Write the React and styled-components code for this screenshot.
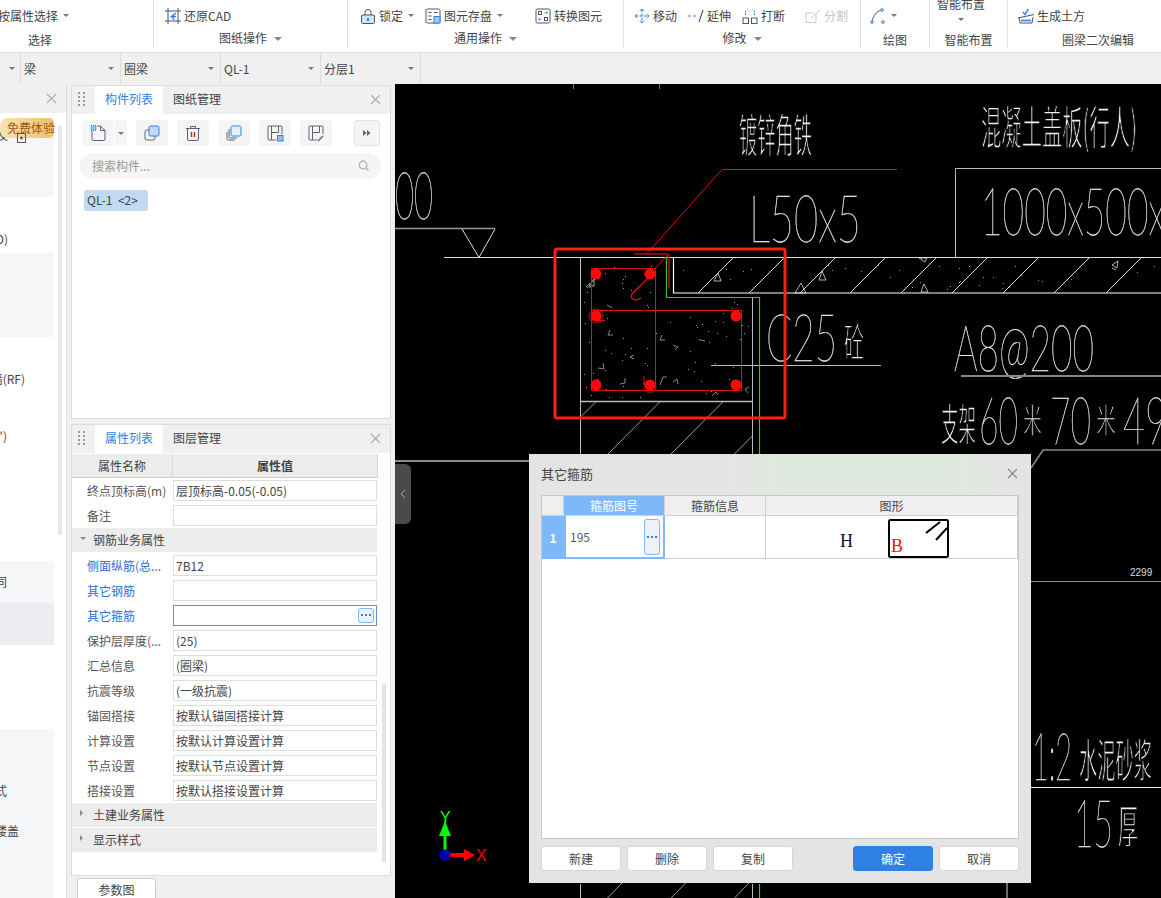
import React from "react";
import styled, { createGlobalStyle } from "styled-components";

const GlobalStyle = createGlobalStyle`
    html, body {
        margin: 0;
        padding: 0;
        background: #f0f0f0;
        font-family: "Noto Sans CJK SC", "Liberation Sans", sans-serif;
        font-size: 12px;
        color: #444;
    }
    * {
        box-sizing: border-box;
    }
`;

// 左侧树的色带
const treeBands = [
    { h: 20, tone: "none" },
    { h: 64, tone: "light", pt: 0, mt: -5, label: "及", end: 8, icon: true },
    { h: 56, tone: "none", pt: 35, label: "D)", end: 8 },
    { h: 84, tone: "light" },
    { h: 224, tone: "none", pt: 35, label: "墙(RF)", end: 25, next: "')", nextMt: 43 },
    { h: 42, tone: "light", pt: 14, label: "同", end: 7 },
    { h: 42, tone: "dark" },
    { h: 84, tone: "none" },
    { h: 169, tone: "light", pt: 55, label: "式", end: 7, next: "楼盖", nextEnd: 19, nextMt: 26 },
];

const propRows = [
    { name: "终点顶标高(m)", value: "层顶标高-0.05(-0.05)" },
    { name: "备注", value: "" },
    { group: "钢筋业务属性", open: true },
    { name: "侧面纵筋(总...", value: "7B12", blue: true },
    { name: "其它钢筋", value: "", blue: true },
    { name: "其它箍筋", value: "", blue: true, active: true },
    { name: "保护层厚度(...", value: "(25)" },
    { name: "汇总信息", value: "(圈梁)" },
    { name: "抗震等级", value: "(一级抗震)" },
    { name: "锚固搭接", value: "按默认锚固搭接计算" },
    { name: "计算设置", value: "按默认计算设置计算" },
    { name: "节点设置", value: "按默认节点设置计算" },
    { name: "搭接设置", value: "按默认搭接设置计算" },
    { group: "土建业务属性" },
    { group: "显示样式" },
];

// 混凝土里的小点, 固定种子
function makeSpecks() {
    const list = [];
    let seed = 37;
    const next = () => {
        seed = (seed * 1103515245 + 12345) % 2147483648;
        return seed / 2147483648;
    };
    for (let i = 0; i < 90; i++) {
        const x = 584 + next() * 166;
        const y = 262 + next() * 136;
        if (x > 658 && y < 300) continue;
        list.push([Math.round(x), Math.round(y)]);
    }
    for (let i = 0; i < 34; i++) {
        list.push([Math.round(676 + next() * 480), Math.round(262 + next() * 28)]);
    }
    return list;
}
const specks = makeSpecks();

const concreteTicks = [
    "M610 330l-2 5h5", "M662 335l-2 5h5", "M634 355l-4 2 4 2", "M598 368l6 1-1-6", "M620 384l5-1v-5",
    "M673 345l5 2-3 3", "M660 385l3-8h4", "M673 382l4-3 1 5", "M590 283l-4 4h5", "M607 305l5 3",
    "M712 396l4-4 2 3", "M748 393l-3-4 4-2", "M700 340l5 1",
];

const rebarDots = [[596, 274], [650, 274], [596, 316], [736, 316], [596, 385], [650, 385], [736, 385]];

function CadDrawing() {
    const hatchX = [698, 749, 800, 850, 901, 952, 1003, 1054, 1106];
    return (
        <CadSvg viewBox="395 84 766 814">
            <CadText x="395" y="219" textLength="38" fontSize="66">00</CadText>
            <CadCjk x="739" y="152" textLength="73" fontSize="46">镀锌角铁</CadCjk>
            <CadCjk x="981" y="144" textLength="156" fontSize="46">混凝土盖板(行人)</CadCjk>
            <CadText x="749" y="242" textLength="112" fontSize="66">L50x5</CadText>
            <CadText x="981" y="235" textLength="184" fontSize="66">1000x500x</CadText>
            <CadText x="766" y="361" textLength="71" fontSize="66">C25</CadText>
            <CadCjk x="844" y="357" textLength="20" fontSize="40">砼</CadCjk>
            <CadText x="954" y="371" textLength="140" fontSize="64">A8@200</CadText>
            <CadCjk x="941" y="441" textLength="35" fontSize="44">支架</CadCjk>
            <CadText x="979" y="444" textLength="39" fontSize="66">60</CadText>
            <CadCjk x="1023" y="433" textLength="19" fontSize="34">米</CadCjk>
            <CadText x="1050" y="444" textLength="41" fontSize="66">70</CadText>
            <CadCjk x="1096" y="433" textLength="20" fontSize="34">米</CadCjk>
            <CadText x="1123" y="444" textLength="44" fontSize="66">49</CadText>
            <CadText x="1032" y="780" textLength="40" fontSize="66">1:2</CadText>
            <CadCjk x="1079" y="777" textLength="73" fontSize="46">水泥砂浆</CadCjk>
            <CadText x="1074" y="847" textLength="39" fontSize="66">15</CadText>
            <CadCjk x="1118" y="843" textLength="20" fontSize="46">厚</CadCjk>
            <SmallNumber x="1130" y="576">2299</SmallNumber>

            <g stroke="#dcdcdc" fill="none" strokeWidth="1">
                <path d="M444 257.5H1161" />
                <path d="M580.5 258V454M580.5 884V898M752.5 298V454M752.5 884V898" stroke="#bbb" />
                <path d="M673.5 258V293H1161" strokeWidth="1.2" stroke="#fff" />
                <path d="M580 401.5H752" strokeWidth="1.4" stroke="#bbb" />
                <path d="M666 297.5H752" stroke="#ccc" />
                <path d="M395 228.5H495" stroke="#999" strokeWidth="1.6" />
                <path d="M462 229L479 257.5L495 229" />
                <path d="M955.5 257V168.5H1161" stroke="#bbb" />
                <path d="M711 365.5H881" stroke="#bbb" />
                <path d="M961 376H1161" stroke="#888" strokeWidth="2" />
                <path d="M1031 468L1043 450H1161" stroke="#888" strokeWidth="1.6" />
                <path d="M395 461H529" stroke="#888" strokeWidth="2" />
                <path d="M1031 787.5H1161" stroke="#eee" />
                <path d="M1007 883V898" stroke="#888" strokeWidth="1.6" />
                {hatchX.map((x) => (
                    <path key={x} d={`M${x} 293L${x + 35} 258`} stroke="#ddd" />
                ))}
                <path d="M580.6 417L596 401.7M608 454L660 401.7M671 454L723 401.7M734.5 454L752.6 435.7M607.5 898L622 883M671 898L685.7 883M734.5 898L749 883" stroke="#999" />
                <path d="M714 281l4-8 3 8zM795 293l6-10 5 10zM819 280l3-9 4 9zM921 292l3-8 4 8zM1112 265l6-4-1 7zM919 258l6 4 2-4z" strokeWidth="0.8" />
                <path d="M589 286l5-7v7zM1112 268l4 2" strokeWidth="0.8" />
                {concreteTicks.map((d) => (
                    <path key={d} d={d} stroke="#aaa" strokeWidth="0.8" />
                ))}
            </g>
            <g fill="#999">
                {specks.map(([x, y]) => (
                    <rect key={`${x}-${y}`} x={x} y={y} width="1" height="1" />
                ))}
            </g>

            <g fill="none" stroke="#2fc82f">
                <path d="M666.5 257V297.5H759.5V454M759.5 884V898" strokeWidth="1.2" />
                <path d="M1031 581.5H1161" stroke="#35d035" />
                <path d="M573.5 84V89M659.5 84V89" stroke="#1fa51f" />
            </g>

            <g fill="none" stroke="#e01010" strokeWidth="1">
                <path d="M646.6 254L722 169.5H897" />
                <path d="M591.5 390.5V268.5H655.5V390.5" />
                <path d="M591.5 390.5H741.5V310.5H591.5" />
                <path d="M655 268.7L668 254.5" />
                <path d="M634 254H668M669 254V289" stroke="#a81414" strokeWidth="1.4" />
                <path d="M650 276L632 294C629 299 636 302 641 298" strokeWidth="1.3" />
                <circle cx="596" cy="316" r="7" stroke="#c01010" />
                <path d="M596 320.5H605" stroke="#c01010" />
                <path d="M644 376V385" />
                <circle cx="650" cy="387" r="6" stroke="#a01010" />
            </g>
            {rebarDots.map(([x, y]) => (
                <circle key={`${x}-${y}`} cx={x} cy={y} r="5.5" fill="#ff0808" />
            ))}
            <rect x="555" y="249" width="230" height="169" rx="2" fill="none" stroke="#fa2014" strokeWidth="3" />

            <path d="M445 855V826" stroke="#00ff00" strokeWidth="3" />
            <path d="M445 821L451 836H439Z" fill="#00ff00" />
            <path d="M450 855H468" stroke="#ff0000" strokeWidth="4" />
            <path d="M475 855L464 849V861Z" fill="#ff0000" />
            <ellipse cx="445" cy="855" rx="5.5" ry="5.5" fill="#0000b0" />
            <AxisLabel x="440" y="823" fill="#00ff00">Y</AxisLabel>
            <AxisLabel x="476" y="861" fill="#ff0000">X</AxisLabel>
        </CadSvg>
    );
}

const RIcon = ({ children }) => (
    <svg width="16" height="16" viewBox="0 0 16 16" fill="none" stroke="#4a5468" strokeWidth="1">
        {children}
    </svg>
);

const icons = {
    restore: (
        <RIcon>
            <path d="M3 0V16M13 0V16M0 3H16M0 13H16" />
            <path d="M11 5L6.5 8.5H11M7 8.5L9 12" stroke="#2f80e5" strokeWidth="1.4" />
        </RIcon>
    ),
    lock: (
        <RIcon>
            <path d="M5 7V4.5a3 3 0 0 1 6 0V7" />
            <rect x="1.5" y="7" width="13" height="8.5" rx="1" fill="#cfe3fa" />
            <path d="M8 10v3" stroke="#2f80e5" strokeWidth="2" />
        </RIcon>
    ),
    store: (
        <RIcon>
            <rect x="1" y="1" width="14" height="14" rx="1.5" />
            <path d="M3.5 4.5h3M9 4.5h3.5M3.5 8h3M3.5 11.5h3" />
            <rect x="9" y="8.5" width="6" height="6.5" fill="#9fc8f5" stroke="#2f80e5" />
        </RIcon>
    ),
    convert: (
        <RIcon>
            <rect x="1" y="1" width="14" height="14" rx="1.5" />
            <rect x="3.5" y="3.5" width="3" height="3" />
            <rect x="9.5" y="9.5" width="3" height="3" />
            <path d="M9.5 5h3l-1-1.5M6.5 11h-3l1 1.5" stroke="#2f80e5" />
        </RIcon>
    ),
    move: (
        <RIcon>
            <path d="M8 1V15M1 8H15M8 1L6 3.5M8 1L10 3.5M8 15L6 12.5M8 15L10 12.5M1 8L3.5 6M1 8L3.5 10M15 8L12.5 6M15 8L12.5 10" stroke="#2f80e5" strokeDasharray="3 1.4" />
        </RIcon>
    ),
    extend: (
        <RIcon>
            <path d="M0 8H3M5 8H8" stroke="#2f80e5" />
            <path d="M11 14L15 2" stroke="#333" />
        </RIcon>
    ),
    split: (
        <RIcon>
            <rect x="1" y="10" width="5.5" height="5.5" />
            <rect x="9.5" y="10" width="5.5" height="5.5" />
            <path d="M3.5 7V3l2-1.5M12.5 7V3l-2-1.5" stroke="#2f80e5" strokeDasharray="2 1" />
        </RIcon>
    ),
    cut: (
        <RIcon>
            <path d="M11 6v8.5H1V5h7" stroke="#c8c8c8" />
            <path d="M6 10L15 2" stroke="#c8c8c8" />
        </RIcon>
    ),
    curve: (
        <RIcon>
            <path d="M2 14C3 8 6 3 12 2" stroke="#4a5468" />
            <circle cx="2" cy="14" r="1.3" stroke="#2f80e5" fill="#fff" />
            <circle cx="12" cy="2" r="1.3" stroke="#2f80e5" fill="#fff" />
            <circle cx="13" cy="14" r="1.3" stroke="#2f80e5" fill="#fff" />
        </RIcon>
    ),
    earth: (
        <RIcon>
            <path d="M1 9L2 15H14L15 9" />
            <path d="M0 10L16 6.5" />
            <path d="M3 12.5H13" stroke="#2f80e5" strokeWidth="1.6" />
            <path d="M5 4L7 6.5L10.5 1" stroke="#2f80e5" strokeWidth="1.4" />
        </RIcon>
    ),
};

const TIcon = ({ children }) => (
    <svg width="18" height="18" viewBox="0 0 18 18" fill="none" stroke="#5a6275" strokeWidth="1">
        {children}
    </svg>
);

const toolIcons = [
    <TIcon key="copy">
        <rect x="2" y="6" width="10" height="10" rx="2" />
        <rect x="6" y="2" width="10" height="10" rx="1.5" fill="#c3daf6" stroke="#2f80e5" />
    </TIcon>,
    <TIcon key="del">
        <path d="M2 4.5H16M6.5 4.5V2.5H11.5V4.5" />
        <path d="M3.5 4.5V15a1.5 1.5 0 0 0 1.5 1.5H13a1.5 1.5 0 0 0 1.5-1.5V4.5" />
        <path d="M7.5 8V13M10.5 8V13" stroke="#e01818" strokeWidth="1.4" />
    </TIcon>,
    <TIcon key="stack">
        <path d="M2 8V14.5A1.5 1.5 0 0 0 3.5 16H10" />
        <path d="M4 5V12.5A1.5 1.5 0 0 0 5.5 14H12" />
        <rect x="6" y="2" width="10" height="10" rx="1.5" fill="#e6f0fc" stroke="#2f80e5" />
    </TIcon>,
    <TIcon key="save">
        <path d="M10 16H3a1 1 0 0 1-1-1V3a1 1 0 0 1 1-1h12a1 1 0 0 1 1 1v7" />
        <path d="M5.5 2V8.5H12.5V2M5.5 8.5V16" />
        <rect x="11.5" y="11.5" width="5.5" height="5.5" fill="#8fbdf3" stroke="#2f80e5" />
    </TIcon>,
    <TIcon key="edit">
        <path d="M10 16H3a1 1 0 0 1-1-1V3a1 1 0 0 1 1-1h12a1 1 0 0 1 1 1v7" />
        <path d="M5.5 2V8.5H12.5V2M5.5 8.5V16" />
        <path d="M11 17L16 12" stroke="#888" strokeWidth="2" />
    </TIcon>,
];

function Grip() {
    return (
        <GripBox>
            {[0, 1, 2, 3, 4, 5, 6, 7].map((i) => (
                <i key={i} />
            ))}
        </GripBox>
    );
}

function CloseMark({ dark }) {
    return (
        <svg width="11" height="11" viewBox="0 0 11 11" stroke={dark ? "#888" : "#aaa"} strokeWidth="1.1">
            <path d="M1 1L10 10M10 1L1 10" />
        </svg>
    );
}

function Dots() {
    return (
        <svg width="10" height="2" viewBox="0 0 10 2" fill="#2f80e5">
            <rect x="0" width="2" height="2" />
            <rect x="4" width="2" height="2" />
            <rect x="8" width="2" height="2" />
        </svg>
    );
}

function PanelHeader({ active, other }) {
    return (
        <PanelHead>
            <Grip />
            <ActiveTab>{active}</ActiveTab>
            <IdleTab>{other}</IdleTab>
            <CloseSlot>
                <CloseMark />
            </CloseSlot>
        </PanelHead>
    );
}

function App() {
    return (
        <Page>
            <GlobalStyle />
            <Ribbon>
                <RibbonGroup $w={227}>
                    <TopRow $pad={71}>
                        <Tool>按属性选择<Caret /></Tool>
                    </TopRow>
                    <GroupLabel>选择</GroupLabel>
                </RibbonGroup>
                <RibbonGroup $w={194}>
                    <TopRow $pad={11}>
                        <Tool>{icons.restore}<span>还原CAD</span></Tool>
                    </TopRow>
                    <GroupLabel $up>图纸操作<LabelCaret /></GroupLabel>
                </RibbonGroup>
                <RibbonGroup $w={276}>
                    <TopRow $pad={12}>
                        <Tool $w={65}>{icons.lock}<span>锁定</span><Caret /></Tool>
                        <Tool $w={110}>{icons.store}<span>图元存盘</span><Caret /></Tool>
                        <Tool>{icons.convert}<span>转换图元</span></Tool>
                    </TopRow>
                    <GroupLabel $up>通用操作<LabelCaret /></GroupLabel>
                </RibbonGroup>
                <RibbonGroup $w={237}>
                    <TopRow $pad={10}>
                        <Tool $w={54}>{icons.move}<span>移动</span></Tool>
                        <Tool $w={54}>{icons.extend}<span>延伸</span></Tool>
                        <Tool $w={63}>{icons.split}<span>打断</span></Tool>
                        <Tool $off>{icons.cut}<span>分割</span></Tool>
                    </TopRow>
                    <GroupLabel $up>修改<LabelCaret /></GroupLabel>
                </RibbonGroup>
                <RibbonGroup $w={69}>
                    <TopRow $pad={9}>
                        <Tool>{icons.curve}<Caret /></Tool>
                    </TopRow>
                    <GroupLabel>绘图</GroupLabel>
                </RibbonGroup>
                <RibbonGroup $w={78}>
                    <SmartTop>
                        <span>智能布置</span>
                        <Caret />
                    </SmartTop>
                    <GroupLabel>智能布置</GroupLabel>
                </RibbonGroup>
                <RibbonGroup $w={180} $last>
                    <TopRow $pad={10}>
                        <Tool>{icons.earth}<span>生成土方</span></Tool>
                    </TopRow>
                    <GroupLabel>圈梁二次编辑</GroupLabel>
                </RibbonGroup>
            </Ribbon>

            <SelectBar>
                <SelectCell $w={21}><Caret /></SelectCell>
                <SelectCell $w={100}>梁<Caret /></SelectCell>
                <SelectCell $w={100}>圈梁<Caret /></SelectCell>
                <SelectCell $w={100}>QL-1<Caret /></SelectCell>
                <SelectCell $w={100}>分层1<Caret /></SelectCell>
            </SelectBar>

            <Workspace>
                <TreePanel>
                    <TreeHead>
                        <CloseMark />
                    </TreeHead>
                    <TreeBody>
                        {treeBands.map((b, i) => (
                            <TreeBand key={i} $h={b.h} $tone={b.tone} $pt={b.pt || 0}>
                                {b.label && (
                                    <TreeText $end={b.end} $mt={b.mt}>
                                        {b.label}
                                        {b.icon && (
                                            <TreeIcon>
                                                <svg width="9" height="10" viewBox="0 0 9 10" fill="none" stroke="#555">
                                                    <rect x="0.5" y="0.5" width="8" height="9" />
                                                    <circle cx="4.5" cy="5" r="1" fill="#555" />
                                                </svg>
                                            </TreeIcon>
                                        )}
                                    </TreeText>
                                )}
                                {b.next && (
                                    <TreeText $end={b.nextEnd || 7} $mt={b.nextMt}>
                                        {b.next}
                                    </TreeText>
                                )}
                            </TreeBand>
                        ))}
                    </TreeBody>
                    <TreeScroll />
                    <FreeBadge>免费体验</FreeBadge>
                </TreePanel>

                <MiddleColumn>
                    <Panel $h={334}>
                        <PanelHeader active="构件列表" other="图纸管理" />
                        <IconBar>
                            <SplitButton>
                                <IconButton $w={32}>
                                    <TIcon>
                                        <path d="M3 7V15a1.5 1.5 0 0 0 1.5 1.5H14.5a1.5 1.5 0 0 0 1.5-1.5V6.5L11.5 2H8" />
                                        <path d="M11.5 2V6.5H16" />
                                        <rect x="2" y="1.5" width="5" height="5" fill="#8fbdf3" stroke="#2f80e5" strokeDasharray="1 1" />
                                    </TIcon>
                                </IconButton>
                                <DropPart><Caret /></DropPart>
                            </SplitButton>
                            {toolIcons.map((icon) => (
                                <IconButton key={icon.key} $w={32}>{icon}</IconButton>
                            ))}
                            <MoreButton>
                                <svg width="8" height="6" viewBox="0 0 8 6" fill="#666">
                                    <path d="M0 0L3.5 3L0 6ZM4 0L7.5 3L4 6Z" />
                                </svg>
                            </MoreButton>
                        </IconBar>
                        <SearchBox>
                            <span>搜索构件...</span>
                            <svg width="11" height="11" viewBox="0 0 11 11" fill="none" stroke="#aaa" strokeWidth="1.2">
                                <circle cx="5" cy="5" r="3.8" />
                                <path d="M8 8L10.5 10.5" />
                            </svg>
                        </SearchBox>
                        <Chip>QL-1&nbsp;&nbsp;&lt;2&gt;</Chip>
                    </Panel>

                    <Panel $h={452}>
                        <PanelHeader active="属性列表" other="图层管理" />
                        <PropHead>
                            <PropHeadCell>属性名称</PropHeadCell>
                            <PropHeadCell $bold>属性值</PropHeadCell>
                        </PropHead>
                        {propRows.map((row) =>
                            row.group ? (
                                <GroupRow key={row.group}>
                                    <GroupBar>
                                        <GroupArrow $open={row.open} />
                                        {row.group}
                                    </GroupBar>
                                </GroupRow>
                            ) : (
                                <PropRow key={row.name}>
                                    <PropName $blue={row.blue}>{row.name}</PropName>
                                    <PropValue $active={row.active}>
                                        {row.value}
                                        {row.active && <DotsButton $small><Dots /></DotsButton>}
                                    </PropValue>
                                </PropRow>
                            )
                        )}
                        <PropScroll />
                    </Panel>

                    <BottomTab>参数图</BottomTab>
                </MiddleColumn>

                <Canvas>
                    <CadDrawing />
                    <CollapseHandle>
                        <svg width="6" height="10" viewBox="0 0 6 10" fill="none" stroke="#aaa">
                            <path d="M5 1L1 5L5 9" />
                        </svg>
                    </CollapseHandle>
                    <Dialog>
                        <DialogHead>
                            <span>其它箍筋</span>
                            <CloseMark dark />
                        </DialogHead>
                        <DialogTable>
                            <CornerCell />
                            <HeadCell $on>箍筋图号</HeadCell>
                            <HeadCell>箍筋信息</HeadCell>
                            <HeadCell>图形</HeadCell>
                            <RowNumber>1</RowNumber>
                            <EditCell>
                                195
                                <DotsButton><Dots /></DotsButton>
                            </EditCell>
                            <BodyCell />
                            <BodyCell>
                                <svg width="252" height="43" viewBox="0 0 252 43">
                                    <text x="74" y="31" fontFamily="Liberation Serif" fontSize="18" fill="#111">H</text>
                                    <rect x="123" y="4" width="59" height="37" rx="1.5" fill="#fff" stroke="#000" strokeWidth="2" />
                                    <text x="125" y="36" fontFamily="Liberation Serif" fontSize="18" fill="#f01010">B</text>
                                    <path d="M160 17L174 6M170 24L181 12" stroke="#000" strokeWidth="2" />
                                </svg>
                            </BodyCell>
                        </DialogTable>
                        <DialogFooter>
                            <FootButton>新建</FootButton>
                            <FootButton>删除</FootButton>
                            <FootButton>复制</FootButton>
                            <FootSpacer />
                            <FootButton $primary>确定</FootButton>
                            <FootButton>取消</FootButton>
                        </DialogFooter>
                    </Dialog>
                </Canvas>
            </Workspace>
        </Page>
    );
}

export default App;

const Page = styled.div`
    width: 1161px;
    height: 898px;
    display: flex;
    flex-direction: column;
    overflow: hidden;
    background: #f0f0f0;
`;

const Ribbon = styled.div`
    height: 53px;
    flex: none;
    display: flex;
    margin-left: -73px;
    background: #fff;
    border-bottom: 1px solid #ddd;
    padding-bottom: 4px;
`;

const RibbonGroup = styled.div`
    width: ${(p) => p.$w}px;
    flex: none;
    border-right: ${(p) => (p.$last ? "none" : "1px solid #e0e0e0")};
    display: flex;
    flex-direction: column;
`;

const TopRow = styled.div`
    height: 31px;
    margin-bottom: 1px;
    padding-left: ${(p) => p.$pad}px;
    display: flex;
    align-items: center;
`;

const SmartTop = styled.div`
    height: 32px;
    margin: -3px 0 3px 7px;
    display: flex;
    flex-direction: column;
    align-items: center;
    width: 48px;
    gap: 7px;
    line-height: 14px;

    i {
        margin-left: 0;
    }
`;

const Tool = styled.div`
    width: ${(p) => (p.$w ? `${p.$w}px` : "auto")};
    display: flex;
    align-items: center;
    gap: 3px;
    white-space: nowrap;
    color: ${(p) => (p.$off ? "#c4c4c4" : "#444")};
`;

const Caret = styled.i`
    display: inline-block;
    margin-left: 2px;
    border-left: 3px solid transparent;
    border-right: 3px solid transparent;
    border-top: 3px solid #777;
`;

const LabelCaret = styled.i`
    display: inline-block;
    margin-left: 7px;
    vertical-align: 2px;
    border-left: 4px solid transparent;
    border-right: 4px solid transparent;
    border-top: 4px solid #888;
`;

const GroupLabel = styled.div`
    text-align: center;
    white-space: nowrap;
    line-height: 14px;
    margin-top: ${(p) => (p.$up ? "-1px" : "1px")};
`;

const SelectBar = styled.div`
    height: 31px;
    flex: none;
    display: flex;
    background: #f0f0f0;
`;

const SelectCell = styled.div`
    width: ${(p) => p.$w}px;
    padding: 0 6px 0 3px;
    display: flex;
    align-items: center;
    justify-content: space-between;
    border-right: 1px solid #dcdcdc;
    color: #444;

    &:first-child {
        justify-content: flex-end;
        padding-right: 5px;
    }
`;

const Workspace = styled.div`
    height: 814px;
    flex: none;
    display: flex;
`;

const TreePanel = styled.div`
    width: 67px;
    flex: none;
    position: relative;
    background: #fff;
    border-right: 1px solid #ddd;
    overflow: hidden;
`;

const TreeHead = styled.div`
    height: 29px;
    background: #f0f0f0;
    display: flex;
    align-items: center;
    justify-content: flex-end;
    padding-right: 9px;
`;

const TreeBody = styled.div`
    width: 54px;
`;

const TreeBand = styled.div`
    display: flow-root;
    height: ${(p) => p.$h}px;
    padding-top: ${(p) => p.$pt}px;
    background: ${(p) => (p.$tone === "light" ? "#f5f6f8" : p.$tone === "dark" ? "#ecedf0" : "#fff")};
`;

const TreeText = styled.div`
    width: ${(p) => p.$end}px;
    margin-top: ${(p) => p.$mt || 0}px;
    height: 14px;
    line-height: 14px;
    display: flex;
    justify-content: flex-end;
    white-space: nowrap;
    position: relative;
`;

const TreeIcon = styled.span`
    position: absolute;
    left: 17px;
    top: 3px;
    z-index: 2;
`;

const TreeScroll = styled.div`
    position: absolute;
    left: 58px;
    top: 41px;
    width: 4px;
    height: 410px;
    border-radius: 2px;
    background: #e8e8e8;
`;

const FreeBadge = styled.div`
    position: absolute;
    left: 0;
    top: 34px;
    width: 54px;
    height: 20px;
    line-height: 19px;
    padding-left: 7px;
    font-size: 12px;
    color: #a05a10;
    white-space: nowrap;
    border-radius: 8px 5px 5px 8px;
    background: linear-gradient(90deg, #f8e3b4, #eec06c);
`;

const MiddleColumn = styled.div`
    width: 320px;
    margin-left: 4px;
    padding-top: 1px;
    flex: none;
    display: flex;
    flex-direction: column;
    gap: 5px;
`;

const Panel = styled.div`
    height: ${(p) => p.$h}px;
    flex: none;
    position: relative;
    background: #fff;
    border: 1px solid #ddd;
    overflow: hidden;
`;

const PanelHead = styled.div`
    height: 28px;
    display: flex;
    align-items: stretch;
    background: #f0f0f0;
`;

const GripBox = styled.div`
    width: 23px;
    padding: 6px 0 0 6px;
    display: grid;
    grid-template-columns: 2px 2px;
    grid-auto-rows: 2px;
    gap: 2px 3px;

    i {
        display: block;
        background: #999;
    }
`;

const ActiveTab = styled.div`
    width: 68px;
    padding-bottom: 3px;
    background: #fff;
    color: #2f80e5;
    display: flex;
    align-items: center;
    justify-content: center;
`;

const IdleTab = styled.div`
    width: 68px;
    padding-bottom: 3px;
    display: flex;
    align-items: center;
    justify-content: center;
`;

const CloseSlot = styled.div`
    margin-left: auto;
    padding: 0 9px 2px 0;
    display: flex;
    align-items: center;
`;

const IconBar = styled.div`
    display: flex;
    gap: 9px;
    padding: 6px 0 0 10px;
`;

const SplitButton = styled.div`
    display: flex;
    gap: 1px;
`;

const IconButton = styled.div`
    width: ${(p) => p.$w}px;
    height: 26px;
    display: flex;
    align-items: center;
    justify-content: center;
    background: #f5f5f5;
    border-radius: 3px;
`;

const DropPart = styled.div`
    width: 12px;
    height: 26px;
    background: #f5f5f5;
    display: flex;
    align-items: center;
    justify-content: center;

    i {
        margin: 0;
    }
`;

const MoreButton = styled.div`
    width: 26px;
    height: 26px;
    margin-left: 13px;
    display: flex;
    align-items: center;
    justify-content: center;
    background: #f5f5f5;
    border: 1px solid #e2e2e2;
    border-radius: 3px;
`;

const SearchBox = styled.div`
    height: 26px;
    margin: 7px 9px 0 8px;
    padding: 0 12px 1px;
    display: flex;
    align-items: center;
    justify-content: space-between;
    background: #f5f5f5;
    border-radius: 13px;
    color: #999;
`;

const Chip = styled.div`
    width: 64px;
    height: 21px;
    margin: 11px 0 0 12px;
    padding-left: 3px;
    line-height: 20px;
    white-space: nowrap;
    background: #c2d9f2;
    border-radius: 3px;
    color: #444;
`;

const PropHead = styled.div`
    height: 24px;
    width: 306px;
    margin-top: 1px;
    display: grid;
    grid-template-columns: 101px 205px;
    background: #ececec;
    border-bottom: 1px solid #ccc;
    border-right: 1px solid #ccc;
`;

const PropHeadCell = styled.div`
    display: flex;
    align-items: center;
    justify-content: center;
    font-weight: ${(p) => (p.$bold ? 700 : 400)};
    border-right: 1px solid #d8d8d8;
`;

const PropRow = styled.div`
    width: 305px;
    height: 25px;
    display: grid;
    grid-template-columns: 101px 204px;
    align-items: center;
`;

const PropName = styled.div`
    padding: 0 0 1px 15px;
    white-space: nowrap;
    color: ${(p) => (p.$blue ? "#2a6fdb" : "#555")};
`;

const PropValue = styled.div`
    height: 21px;
    padding: 0 2px 1px 2px;
    display: flex;
    align-items: center;
    background: #fff;
    border: 1px solid ${(p) => (p.$active ? "#5b8fd9" : "#ddd")};
    color: #444;
`;

const GroupRow = styled.div`
    height: 25px;
    width: 305px;
`;

const GroupBar = styled.div`
    height: 24px;
    padding: 0 0 1px 8px;
    display: flex;
    align-items: center;
    gap: 7px;
    background: #ececec;
`;

const GroupArrow = styled.i`
    width: 0;
    height: 0;
    margin-bottom: 3px;
    border-style: solid;
    border-color: transparent;
    ${(p) =>
        p.$open
            ? `border-width: 3px 3px 0 3px; border-top-color: #888;`
            : `border-width: 3px 0 3px 3px; border-left-color: #888; margin-right: 3px;`}
`;

const PropScroll = styled.div`
    position: absolute;
    left: 310px;
    top: 258px;
    width: 4px;
    height: 180px;
    border-radius: 2px;
    background: #e4e4e4;
`;

const BottomTab = styled.div`
    width: 79px;
    height: 30px;
    margin: -3px 0 0 6px;
    display: flex;
    justify-content: center;
    padding-top: 2px;
    background: #fff;
    border: 1px solid #ccc;
    border-radius: 3px 3px 0 0;
`;

const Canvas = styled.div`
    flex: 1;
    margin-left: 4px;
    position: relative;
    background: #000;
    overflow: hidden;
`;

const CadSvg = styled.svg`
    display: block;
    width: 766px;
    height: 814px;
`;

const CadText = styled.text.attrs({ lengthAdjust: "spacingAndGlyphs" })`
    font-family: "Lato", "Noto Sans CJK SC", sans-serif;
    font-weight: 100;
    fill: #e8e8e8;
    stroke: #e8e8e8;
    stroke-width: 0.4px;
    filter: grayscale(1);
`;

// 中文字体没有细体, 用黑色描边把笔画压细
const CadCjk = styled.text.attrs({ lengthAdjust: "spacingAndGlyphs" })`
    font-family: "Noto Sans CJK SC", sans-serif;
    fill: #f0f0f0;
    stroke: #000;
    stroke-width: 1.5px;
    filter: grayscale(1);
`;

const SmallNumber = styled.text`
    font-family: "Liberation Sans", sans-serif;
    font-size: 10px;
    fill: #ddd;
`;

const AxisLabel = styled.text`
    font-family: "Liberation Sans", sans-serif;
    font-size: 16px;
`;

const CollapseHandle = styled.div`
    position: absolute;
    left: 0;
    top: 380px;
    width: 16px;
    height: 60px;
    display: flex;
    align-items: center;
    justify-content: center;
    background: #4a4a4a;
    border-radius: 0 6px 6px 0;
`;

const Dialog = styled.div`
    position: absolute;
    left: 134px;
    top: 370px;
    width: 502px;
    height: 429px;
    padding: 0 12px;
    display: flex;
    flex-direction: column;
    background: #e4e4e4;
`;

const DialogHead = styled.div`
    height: 41px;
    margin: 0 -12px;
    padding: 0 13px 2px 12px;
    display: flex;
    align-items: center;
    justify-content: space-between;
    font-size: 13px;
    color: #444;
    background: linear-gradient(90deg, #e4e4e4 40%, #dfe8de 50%, #dfe8de 85%, #e4e4e4 95%);
`;

const DialogTable = styled.div`
    height: 344px;
    display: grid;
    grid-template-columns: 22px 101px 101px 252px;
    grid-template-rows: 20px 43px;
    background: #fff;
    border: 1px solid #c8c8c8;
`;

const CornerCell = styled.div`
    background: #efefef;
    border-right: 1px solid #d0d0d0;
    border-bottom: 1px solid #d0d0d0;
`;

const HeadCell = styled.div`
    display: flex;
    align-items: center;
    justify-content: center;
    background: ${(p) => (p.$on ? "#7eb8f8" : "#efefef")};
    color: ${(p) => (p.$on ? "#fff" : "#444")};
    border-right: 1px solid #d0d0d0;
    border-bottom: 1px solid #d0d0d0;
`;

const RowNumber = styled.div`
    display: flex;
    align-items: center;
    justify-content: center;
    background: #7eb8f8;
    color: #fff;
    font-weight: 700;
`;

const EditCell = styled.div`
    padding: 2px 3px 2px 4px;
    display: flex;
    align-items: center;
    justify-content: space-between;
    border: 2px solid #7eb8f8;
    border-top: none;
    color: #555;
`;

const BodyCell = styled.div`
    border-right: 1px solid #d0d0d0;
    border-bottom: 1px solid #d0d0d0;
`;

const DotsButton = styled.div`
    width: 16px;
    height: ${(p) => (p.$small ? "15px" : "36px")};
    margin-left: auto;
    flex: none;
    display: flex;
    align-items: center;
    justify-content: center;
    background: #eef1f9;
    border: 1px solid #7eb8f8;
    border-radius: 3px;
`;

const DialogFooter = styled.div`
    margin-top: 7px;
    display: flex;
    gap: 6px;
`;

const FootButton = styled.div`
    width: 80px;
    height: 25px;
    display: flex;
    align-items: center;
    justify-content: center;
    border-radius: 3px;
    background: ${(p) => (p.$primary ? "#2f80e5" : "#fff")};
    color: ${(p) => (p.$primary ? "#fff" : "#444")};
    border: 1px solid ${(p) => (p.$primary ? "#2f80e5" : "#d6d6d6")};
`;

const FootSpacer = styled.div`
    flex: 1;
`;
